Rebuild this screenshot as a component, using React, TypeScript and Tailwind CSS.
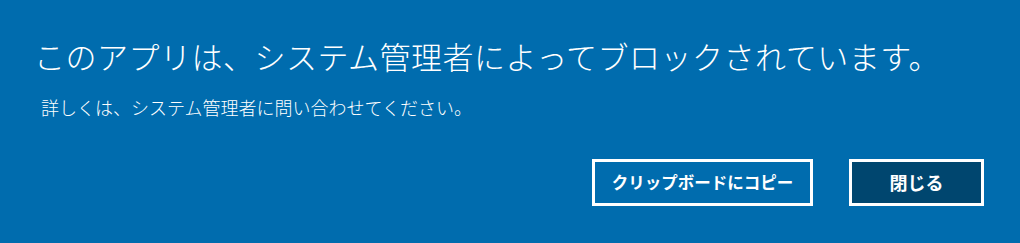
export default function App() {
  return (
    <div
      className="w-[1020px] h-[243px] bg-[#006cae] text-white flex flex-col overflow-hidden"
      style={{ fontFamily: '"Noto Sans CJK JP", "Noto Sans", sans-serif' }}
    >
      <div className="pl-[34px] pt-[36px] text-[31px] leading-[40px] font-light tracking-[0.5px]">
        このアプリは、システム管理者によってブロックされています。
      </div>
      <div className="pl-[41px] mt-[19px] text-[18px] leading-[24px] font-light">
        詳しくは、システム管理者に問い合わせてください。
      </div>
      <div className="flex justify-end gap-[36px] pr-[36px] mt-[40px]">
        <button className="w-[221px] h-[47px] border-[3px] border-white bg-[#006cae] text-[16.5px] font-bold flex items-center justify-center">
          クリップボードにコピー
        </button>
        <button className="w-[135px] h-[47px] border-[3px] border-white bg-[#00466f] text-[18px] font-bold flex items-center justify-center">
          閉じる
        </button>
      </div>
    </div>
  );
}
